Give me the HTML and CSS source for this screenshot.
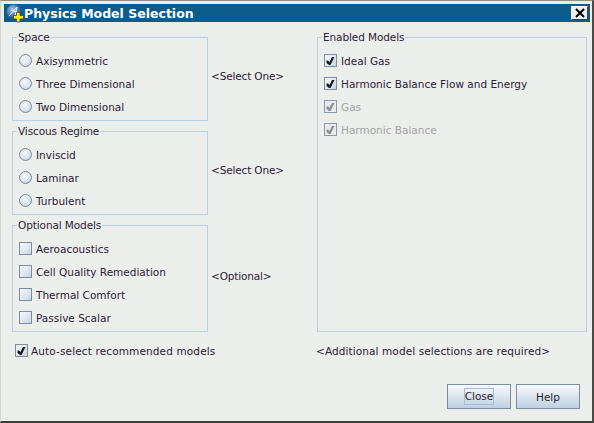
FILE: index.html
```html
<!DOCTYPE html>
<html lang="en">

<head>
    <meta charset="UTF-8">
    <title>Physics Model Selection</title>
    <link rel="stylesheet" href="styles.css">
</head>

<body>
    <div class="dialog">
        <div class="titleBar">
            <svg class="appIcon" width="19" height="19" viewBox="0 0 19 19">
                <defs>
                    <radialGradient id="globe" cx="0.4" cy="0.35" r="0.7">
                        <stop offset="0" stop-color="#b9d0ea"/>
                        <stop offset="0.5" stop-color="#4f7fbc"/>
                        <stop offset="1" stop-color="#1b4282"/>
                    </radialGradient>
                </defs>
                <circle cx="8" cy="8" r="7.5" fill="url(#globe)"/>
                <path d="M3 12 L11 3 L9 12 M5 6 L13 9" stroke="#f2f6fb" stroke-width="1" fill="none"/>
                <path d="M10.5 8.5h3.5v3h3.5v3.5h-3.5v3h-3.5v-3H7.5v-3.5h3z" fill="#f8e81c" stroke="#3c3610" stroke-width="0.7"/>
            </svg>
            <span class="titleText">Physics Model Selection</span>
            <button class="closeX" type="button" aria-label="Close">
                <svg width="10" height="10" viewBox="0 0 10 10">
                    <path d="M1 1 L9 9 M9 1 L1 9" stroke="#000" stroke-width="2" fill="none"/>
                </svg>
            </button>
        </div>

        <div class="content">
            <div class="mainGrid">
                <div class="leftCol">
                    <div class="groupRow">
                        <fieldset class="group spaceGroup">
                            <legend>Space</legend>
                            <div class="option"><span class="radio"></span>Axisymmetric</div>
                            <div class="option"><span class="radio"></span>Three Dimensional</div>
                            <div class="option"><span class="radio"></span>Two Dimensional</div>
                        </fieldset>
                        <span class="hint">&lt;Select One&gt;</span>
                    </div>
                    <div class="groupRow">
                        <fieldset class="group spaceGroup">
                            <legend>Viscous Regime</legend>
                            <div class="option"><span class="radio"></span>Inviscid</div>
                            <div class="option"><span class="radio"></span>Laminar</div>
                            <div class="option"><span class="radio"></span>Turbulent</div>
                        </fieldset>
                        <span class="hint">&lt;Select One&gt;</span>
                    </div>
                    <div class="groupRow">
                        <fieldset class="group optionalGroup">
                            <legend>Optional Models</legend>
                            <div class="option"><span class="check"></span>Aeroacoustics</div>
                            <div class="option"><span class="check"></span>Cell Quality Remediation</div>
                            <div class="option"><span class="check"></span>Thermal Comfort</div>
                            <div class="option"><span class="check"></span>Passive Scalar</div>
                        </fieldset>
                        <span class="hint">&lt;Optional&gt;</span>
                    </div>
                </div>

                <fieldset class="group enabledGroup">
                    <legend>Enabled Models</legend>
                    <div class="option"><span class="check"><svg class="tick" viewBox="0 0 11 11"><path d="M1.5 5.5 L1.5 8 L4 10 L5.5 10 L9.5 2 L7 2 L4.5 7 L3 5.5z"/></svg></span>Ideal Gas</div>
                    <div class="option"><span class="check"><svg class="tick" viewBox="0 0 11 11"><path d="M1.5 5.5 L1.5 8 L4 10 L5.5 10 L9.5 2 L7 2 L4.5 7 L3 5.5z"/></svg></span>Harmonic Balance Flow and Energy</div>
                    <div class="option disabled"><span class="check"><svg class="tick" viewBox="0 0 11 11"><path d="M1.5 5.5 L1.5 8 L4 10 L5.5 10 L9.5 2 L7 2 L4.5 7 L3 5.5z"/></svg></span>Gas</div>
                    <div class="option disabled"><span class="check"><svg class="tick" viewBox="0 0 11 11"><path d="M1.5 5.5 L1.5 8 L4 10 L5.5 10 L9.5 2 L7 2 L4.5 7 L3 5.5z"/></svg></span>Harmonic Balance</div>
                </fieldset>
            </div>

            <div class="statusRow">
                <div class="option autoSelect"><span class="check"><svg class="tick" viewBox="0 0 11 11"><path d="M1.5 5.5 L1.5 8 L4 10 L5.5 10 L9.5 2 L7 2 L4.5 7 L3 5.5z"/></svg></span>Auto-select recommended models</div>
                <div class="statusText">&lt;Additional model selections are required&gt;</div>
            </div>

            <div class="buttonRow">
                <button class="btn" type="button"><span class="focusRing">Close</span></button>
                <button class="btn" type="button">Help</button>
            </div>
        </div>
    </div>
</body>

</html>
```

FILE: styles.css
```css
*{
    margin: 0;
    padding: 0;
    box-sizing: border-box;
}

body{
    background: #eceeeb;
    font-family: "DejaVu Sans", sans-serif;
    font-size: 10.5px;
    color: #2c2236;
}

.dialog{
    height: 423px;
    display: flex;
    flex-direction: column;
    padding: 3px 2px 3px 3px;
    background: #eceeeb;
    border-top: 1px solid #8f8f8c;
    border-left: 1px solid #d4d4d0;
    border-right: 2px solid #4a4a48;
    border-bottom: 2px solid #3f3f3d;
}

.titleBar{
    height: 18px;
    display: flex;
    align-items: center;
    background: #0c5c8c;
    color: #fff;
    flex-shrink: 0;
}

.appIcon{
    flex-shrink: 0;
    margin-left: 2px;
    margin-top: 1px;
}

.titleText{
    margin-left: -1px;
    font-size: 12.5px;
    font-weight: bold;
}

.closeX{
    margin-left: auto;
    margin-right: 2px;
    width: 17px;
    height: 14px;
    display: flex;
    align-items: center;
    justify-content: center;
    background: #eceeeb;
    border: 1px solid;
    border-color: #fff #404040 #404040 #fff;
}

.content{
    flex: 1;
    display: flex;
    flex-direction: column;
    padding: 9px 0 0 8px;
}

.mainGrid{
    display: grid;
    grid-template-columns: 305px 270px;
    height: 301px;
    flex-shrink: 0;
}

.leftCol{
    display: flex;
    flex-direction: column;
    gap: 4px;
}

.groupRow{
    display: flex;
    align-items: center;
}

.group{
    border: 1px solid #b8cfe5;
    padding: 5px 0 0 6px;
    display: flex;
    flex-direction: column;
}

.group legend{
    margin-left: -2px;
    padding: 0 1px;
    line-height: 13px;
    letter-spacing: -0.1px;
}

.spaceGroup{
    width: 196px;
    height: 90px;
}

.optionalGroup{
    width: 196px;
    height: 113px;
}

.enabledGroup{
    width: 270px;
    height: 301px;
}

.option{
    height: 23px;
    flex-shrink: 0;
    display: flex;
    align-items: center;
    white-space: nowrap;
}

.radio{
    width: 13px;
    height: 13px;
    margin-right: 4px;
    border: 1px solid #7d8ba3;
    border-radius: 50%;
    background: radial-gradient(circle at 42% 35%, #f6f8fb 0, #dfe6f0 50%, #b4c4da 100%);
    flex-shrink: 0;
}

.check{
    width: 13px;
    height: 13px;
    margin-right: 4px;
    border: 1px solid #7d8ba3;
    background: linear-gradient(135deg, #f6f8fb 0, #dfe6f0 55%, #c6d2e2 100%);
    flex-shrink: 0;
    display: flex;
}

.tick{
    width: 11px;
    height: 11px;
    fill: #1c1c1c;
}

.disabled{
    color: #a3a3a6;
}

.disabled .check{
    background: #e8ebec;
    border-color: #8d99ab;
}

.disabled .tick{
    fill: #8d8f92;
}

.hint{
    margin-left: 3px;
    letter-spacing: -0.15px;
}

.statusRow{
    display: flex;
    align-items: center;
    margin-top: 7px;
    height: 23px;
}

.autoSelect{
    width: 305px;
    padding-left: 3px;
    letter-spacing: 0.13px;
}

.autoSelect .check{
    margin-right: 3px;
}

.statusText{
    margin-left: -1px;
    letter-spacing: 0.1px;
}

.buttonRow{
    display: flex;
    justify-content: flex-end;
    gap: 5px;
    margin-top: auto;
    padding: 0 10px 9px 0;
}

.btn{
    width: 64px;
    height: 25px;
    display: flex;
    align-items: center;
    justify-content: center;
    border: 1px solid #7d8ba3;
    background: linear-gradient(#f6f8fb 0, #e8edf3 30%, #bdcfe1 100%);
    font-family: "DejaVu Sans", sans-serif;
    font-size: 10.5px;
    color: #2c2236;
}

.focusRing{
    border: 1px solid #a8bcd4;
    padding: 1px 0;
    line-height: 13px;
}
```
